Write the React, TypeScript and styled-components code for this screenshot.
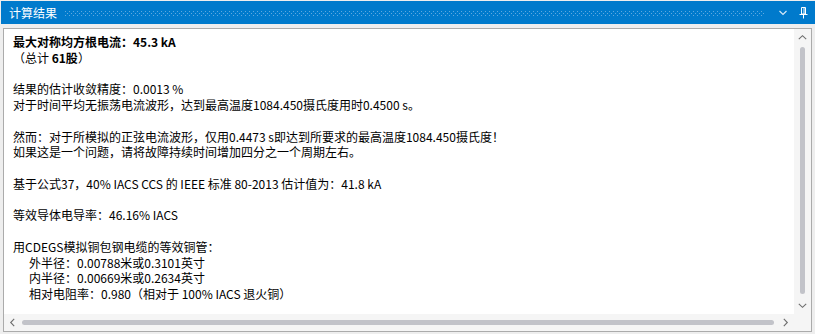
import styled, { createGlobalStyle } from 'styled-components'

const GlobalStyle = createGlobalStyle`
  html, body {
    margin: 0;
    padding: 0;
    background: #eeeeee;
  }
  body {
    font-family: "Noto Sans CJK SC", "Noto Sans", sans-serif;
  }
`

const Window = styled.div`
  width: 815px;
  height: 334px;
  display: flex;
  flex-direction: column;
  box-sizing: border-box;
  padding-top: 1px;
`

const TitleBar = styled.div`
  height: 23px;
  margin-left: 1px;
  background: #007acc;
  display: flex;
  align-items: center;
  padding: 0 6px 0 8px;
  gap: 8px;
  color: #ffffff;
  font-size: 12px;
`

const TitleText = styled.span`
  line-height: 23px;
  white-space: nowrap;
`

const Grip = styled.div`
  flex: 1;
  height: 5px;
  margin-top: 1px;
  background:
    radial-gradient(circle at 0.5px 0.5px, #5fa9df 0.6px, transparent 0.9px) 0 0 / 4px 4px,
    radial-gradient(circle at 0.5px 0.5px, #5fa9df 0.6px, transparent 0.9px) 2px 2px / 4px 4px;
  margin-right: 4px;
`

const TitleIcon = styled.span`
  display: flex;
  align-items: center;
  justify-content: center;
  width: 12px;
  height: 16px;
`

const Panel = styled.div`
  flex: 1;
  margin: 4px 3px 2px 3px;
  border: 1px solid #ababab;
  display: grid;
  grid-template-columns: 1fr 17px;
  grid-template-rows: 1fr 17px;
  background: #f5f5f5;
  min-height: 0;
`

const Content = styled.div`
  background: #ffffff;
  overflow: hidden;
  padding: 5px 9px;
  font-size: 12px;
  line-height: 15.75px;
  color: #000000;
  white-space: nowrap;
`

const Line = styled.div<{ $indent?: boolean; $bold?: boolean }>`
  height: 15.75px;
  padding-left: ${({ $indent }) => ($indent ? '16px' : '0')};
  font-weight: ${({ $bold }) => ($bold ? 700 : 400)};
`

const VScroll = styled.div`
  display: flex;
  flex-direction: column;
  align-items: center;
  background: #f5f5f5;
`

const HScroll = styled.div`
  display: flex;
  align-items: center;
  background: #f5f5f5;
`

const Arrow = styled.div`
  width: 17px;
  height: 17px;
  display: flex;
  align-items: center;
  justify-content: center;
  flex-shrink: 0;
`

const VTrack = styled.div`
  flex: 1;
  width: 100%;
  display: flex;
  justify-content: center;
  padding: 1px 0 3px;
  box-sizing: border-box;
`

const VThumb = styled.div`
  width: 5px;
  height: 100%;
  border-radius: 3px;
  background: #c2c3c9;
`

const HTrack = styled.div`
  flex: 1;
  height: 100%;
  display: flex;
  align-items: center;
  padding: 0 3px 0 1px;
`

const HThumb = styled.div`
  width: 100%;
  height: 5px;
  border-radius: 3px;
  background: #c2c3c9;
`

const Corner = styled.div`
  background: #f5f5f5;
`

const Chevron = ({ dir }: { dir: 'up' | 'down' | 'left' | 'right' }) => {
  const rot = { up: 180, down: 0, left: 90, right: -90 }[dir]
  return (
    <svg width="9" height="9" viewBox="0 0 9 9" style={{ transform: `rotate(${rot}deg)` }}>
      <path d="M0.8 2.8 L4.5 6.3 L8.2 2.8" fill="none" stroke="#6d6d6d" strokeWidth="1.1" />
    </svg>
  )
}

export default function App() {
  return (
    <>
      <GlobalStyle />
      <Window>
        <TitleBar>
          <TitleText>计算结果</TitleText>
          <Grip />
          <TitleIcon>
            <svg width="8" height="6" viewBox="0 0 8 6">
              <path d="M0.5 1 L4 4.5 L7.5 1" fill="none" stroke="#d6e9f7" strokeWidth="1.2" />
            </svg>
          </TitleIcon>
          <TitleIcon>
            <svg width="9" height="12" viewBox="0 0 9 12">
              <path d="M2.5 0.5 H6.5 V7 H2.5 Z M5 0.5 V7" fill="none" stroke="#ffffff" strokeWidth="1" />
              <path d="M0.5 7.5 H8.5" stroke="#ffffff" strokeWidth="1" />
              <path d="M4.5 7.5 V11.5" stroke="#ffffff" strokeWidth="1" />
            </svg>
          </TitleIcon>
        </TitleBar>
        <Panel>
          <Content>
            <Line $bold>最大对称均方根电流：45.3 kA</Line>
            <Line>（总计 <b>61股</b>）</Line>
            <Line />
            <Line>结果的估计收敛精度：0.0013 %</Line>
            <Line>对于时间平均无振荡电流波形，达到最高温度1084.450摄氏度用时0.4500 s。</Line>
            <Line />
            <Line>然而：对于所模拟的正弦电流波形，仅用0.4473 s即达到所要求的最高温度1084.450摄氏度！</Line>
            <Line>如果这是一个问题，请将故障持续时间增加四分之一个周期左右。</Line>
            <Line />
            <Line>基于公式37，40% IACS CCS 的 IEEE 标准 80-2013 估计值为：41.8 kA</Line>
            <Line />
            <Line>等效导体电导率：46.16% IACS</Line>
            <Line />
            <Line>用CDEGS模拟铜包钢电缆的等效铜管：</Line>
            <Line $indent>外半径：0.00788米或0.3101英寸</Line>
            <Line $indent>内半径：0.00669米或0.2634英寸</Line>
            <Line $indent>相对电阻率：0.980（相对于 100% IACS 退火铜）</Line>
          </Content>
          <VScroll>
            <Arrow><Chevron dir="up" /></Arrow>
            <VTrack><VThumb /></VTrack>
            <Arrow><Chevron dir="down" /></Arrow>
          </VScroll>
          <HScroll>
            <Arrow><Chevron dir="left" /></Arrow>
            <HTrack><HThumb /></HTrack>
            <Arrow><Chevron dir="right" /></Arrow>
          </HScroll>
          <Corner />
        </Panel>
      </Window>
    </>
  )
}
